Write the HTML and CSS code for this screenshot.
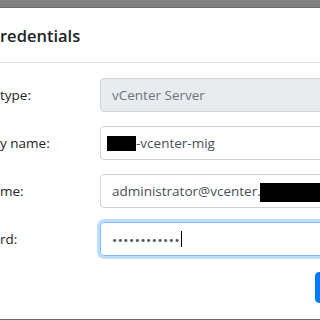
FILE: index.html
```html
<!DOCTYPE html>
<html>
<head>
<meta charset="utf-8">
<link rel="stylesheet" href="styles.css">
</head>
<body>
<div class="backdrop">
  <div class="modal">
    <div class="modal-header">
      <h5 class="modal-title">redentials</h5>
    </div>
    <div class="modal-body">
      <div class="form-row">
        <label class="label">type:</label>
        <div class="field disabled">vCenter Server</div>
      </div>
      <div class="form-row">
        <label class="label">y name:</label>
        <div class="field"><span class="redact redact-a"></span>-vcenter-mig</div>
      </div>
      <div class="form-row">
        <label class="label">me:</label>
        <div class="field">administrator@vcenter.<span class="redact redact-b"></span></div>
      </div>
      <div class="form-row">
        <label class="label">rd:</label>
        <div class="field focused"><span class="dots">••••••••••••</span><span class="caret"></span></div>
      </div>
    </div>
    <div class="modal-footer">
      <button class="btn-primary" aria-label="Save"></button>
    </div>
  </div>
</div>
</body>
</html>
```
FILE: styles.css
```css
html, body {
  margin: 0;
  padding: 0;
  width: 320px;
  height: 320px;
  overflow: hidden;
}
body {
  font-family: "Open Sans", "Noto Sans", sans-serif;
  font-size: 13.5px;
  color: #212529;
}
.backdrop {
  background: #808080;
  height: 320px;
  padding-top: 7px;
  box-sizing: border-box;
}
.modal {
  width: 391px;
  height: 311px;
  background: #fff;
  border-top: 1px solid #6a6a6a;
  border-bottom: 1px solid #6a6a6a;
  display: flex;
  flex-direction: column;
}
.modal-header {
  height: 54px;
  border-bottom: 1px solid #dee2e6;
  display: flex;
  align-items: center;
}
.modal-title {
  margin: 0;
  font-size: 16.5px;
  font-weight: 600;
  color: #212529;
  line-height: 1.2;
  padding-top: 2px;
}
.modal-body {
  padding-top: 15px;
  padding-right: 16px;
}
.form-row {
  display: flex;
  align-items: center;
  height: 34px;
  margin-bottom: 14px;
}
.label {
  width: 100px;
  flex: none;
  color: #212529;
}
.field {
  flex: 1;
  height: 34px;
  box-sizing: border-box;
  border: 1px solid #ced4da;
  border-radius: 4px;
  padding: 0 11px;
  display: flex;
  align-items: center;
  color: #495057;
  white-space: nowrap;
  overflow: hidden;
}
.field.disabled {
  background: #e9ecef;
  color: #6c757d;
}
.field.focused {
  border-color: #80bdff;
  box-shadow: 0 0 0 3px rgba(0, 123, 255, 0.25);
}
.redact {
  display: inline-block;
  background: #000;
  flex: none;
}
.redact-a {
  width: 29px;
  height: 15px;
  margin-left: -5px;
}
.redact-b {
  width: 60px;
  height: 19px;
  margin-left: -1px;
  position: relative;
  top: 1px;
}
.dots {
  letter-spacing: 0.6px;
  font-size: 13.5px;
  position: relative;
  top: 1px;
}
.caret {
  display: inline-block;
  width: 1px;
  height: 16px;
  background: #000;
  margin-left: 1px;
}
.modal-footer {
  flex: 1;
  display: flex;
  justify-content: flex-end;
  align-items: flex-start;
  padding: 2px 16px 0 0;
}
.btn-primary {
  width: 60px;
  height: 31px;
  background: #007bff;
  border: 1px solid #007bff;
  border-radius: 4px;
  padding: 0;
}
```
